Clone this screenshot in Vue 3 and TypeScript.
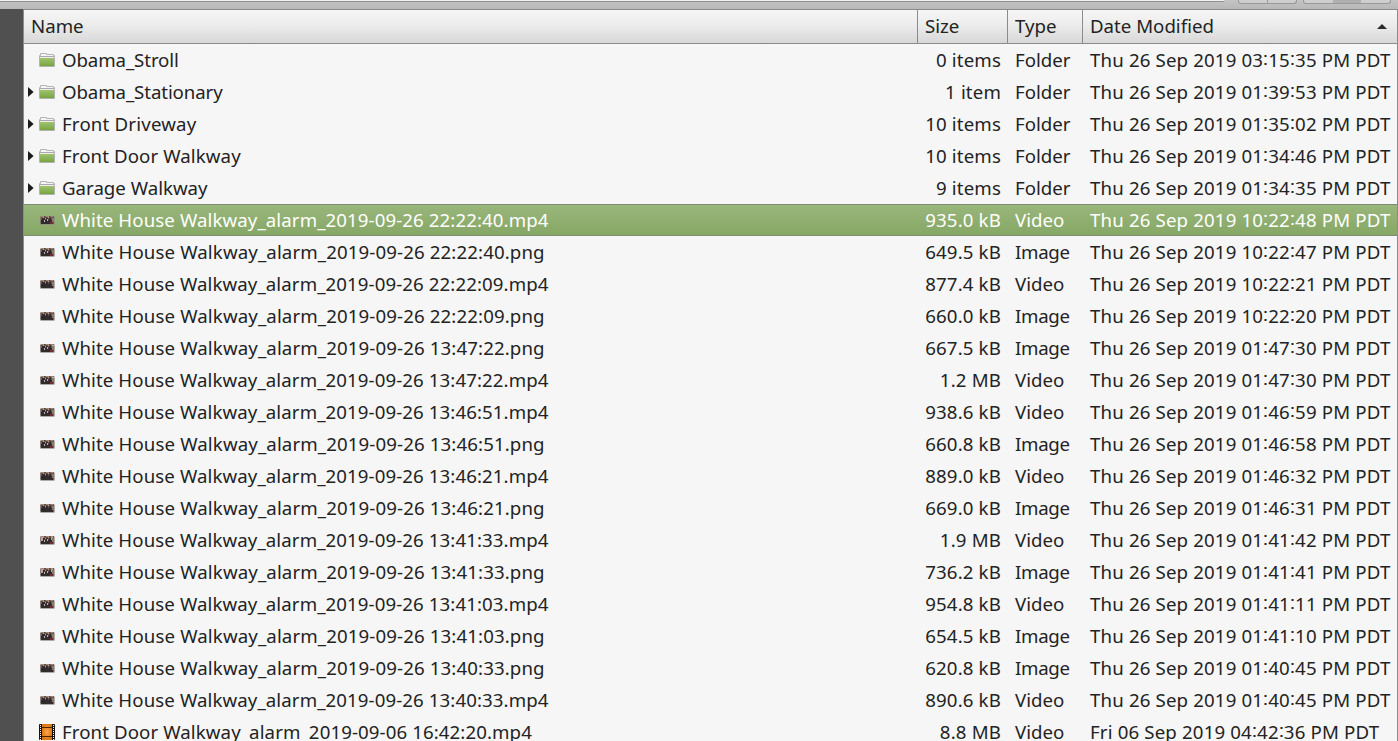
<script setup lang="ts">
interface Entry {
  name: string
  size: string
  kind: 'Folder' | 'Video' | 'Image'
  date: string
  icon: 'folder' | 'thumb' | 'film'
  tracking: 'tight' | 'normal' | 'loose' | 'looser' | 'wide'
  expandable?: boolean
  selected?: boolean
  tone?: number
}

const folder = (name: string, size: string, time: string, tracking: Entry['tracking'], expandable = true): Entry => ({
  name, size, kind: 'Folder', date: `Thu 26 Sep 2019 ${time} PM PDT`, icon: 'folder', tracking, expandable,
})

const alarm = (stamp: string, ext: 'mp4' | 'png', size: string, time: string, tone = 0): Entry => ({
  name: `White House Walkway_alarm_2019-09-26 ${stamp}.${ext}`,
  size,
  kind: ext === 'mp4' ? 'Video' : 'Image',
  date: `Thu 26 Sep 2019 ${time} PM PDT`,
  icon: 'thumb',
  tracking: ext === 'mp4' ? 'loose' : 'looser',
  tone,
})

const entries: Entry[] = [
  folder('Obama_Stroll', '0 items', '03:15:35', 'tight', false),
  folder('Obama_Stationary', '1 item', '01:39:53', 'tight'),
  folder('Front Driveway', '10 items', '01:35:02', 'wide'),
  folder('Front Door Walkway', '10 items', '01:34:46', 'loose'),
  folder('Garage Walkway', '9 items', '01:34:35', 'normal'),
  { ...alarm('22:22:40', 'mp4', '935.0 kB', '10:22:48', 1), selected: true },
  alarm('22:22:40', 'png', '649.5 kB', '10:22:47', 1),
  alarm('22:22:09', 'mp4', '877.4 kB', '10:22:21'),
  alarm('22:22:09', 'png', '660.0 kB', '10:22:20'),
  alarm('13:47:22', 'png', '667.5 kB', '01:47:30', 2),
  alarm('13:47:22', 'mp4', '1.2 MB', '01:47:30', 2),
  alarm('13:46:51', 'mp4', '938.6 kB', '01:46:59', 1),
  alarm('13:46:51', 'png', '660.8 kB', '01:46:58', 1),
  alarm('13:46:21', 'mp4', '889.0 kB', '01:46:32'),
  alarm('13:46:21', 'png', '669.0 kB', '01:46:31'),
  alarm('13:41:33', 'mp4', '1.9 MB', '01:41:42', 3),
  alarm('13:41:33', 'png', '736.2 kB', '01:41:41', 3),
  alarm('13:41:03', 'mp4', '954.8 kB', '01:41:11', 1),
  alarm('13:41:03', 'png', '654.5 kB', '01:41:10', 1),
  alarm('13:40:33', 'png', '620.8 kB', '01:40:45'),
  alarm('13:40:33', 'mp4', '890.6 kB', '01:40:45'),
  { name: 'Front Door Walkway_alarm_2019-09-06 16:42:20.mp4', size: '8.8 MB', kind: 'Video', date: 'Fri 06 Sep 2019 04:42:36 PM PDT', icon: 'film', tracking: 'loose' },
]

// Times are displayed with the ratio sign as separator
const ratio = (s: string) => s.replace(/:/g, '\u2236')
</script>

<template>
  <div class="window">
    <div class="toolbar">
      <div class="pathbar"></div>
      <div class="group nav"><i></i><i></i></div>
      <div class="group views"><i></i><i class="on"></i><i></i></div>
    </div>
    <div class="body">
      <div class="sidebar"></div>
      <div class="list">
        <div class="header">
          <div class="cell">Name</div>
          <div class="cell">Size</div>
          <div class="cell">Type</div>
          <div class="cell last"><span>Date Modified</span><svg width="10" height="5" viewBox="0 0 10 5"><path d="M5 0L10 5H0Z" fill="#2b2b2b" /></svg></div>
        </div>
        <div v-for="e in entries" :key="e.name" class="row" :class="{ selected: e.selected }">
          <div class="name">
            <span class="arrow"><svg v-if="e.expandable" width="6" height="10" viewBox="0 0 6 10"><path d="M0 0L5.6 5L0 10Z" fill="#1c1c1c" /></svg></span>
            <svg v-if="e.icon === 'folder'" class="icon" width="16" height="16" viewBox="0 0 16 16">
              <defs>
                <linearGradient id="leaf" x1="0" y1="0" x2="0" y2="1">
                  <stop offset="0" stop-color="#a0c36e" /><stop offset="1" stop-color="#78a443" />
                </linearGradient>
              </defs>
              <path d="M.5 14.5V3.5H1.5V1.5H7.5V2.5H14.5V3.5H15.5V14.5Z" fill="#f4f4f4" stroke="#b3b3b3" />
              <path d="M1 4.5H15" stroke="#a9a9a9" />
              <path d="M1 5.5H15" stroke="#eeeeee" />
              <rect x="1" y="6" width="14" height="8" fill="url(#leaf)" />
            </svg>
            <svg v-else-if="e.icon === 'thumb'" class="icon" width="16" height="16" viewBox="0 0 16 16">
              <rect x="1" y="4" width="15" height="9" rx="1.5" fill="#8f8b86" fill-opacity=".7" />
              <rect x="1.5" y="4" width="13.5" height="8" rx="1" fill="#66564e" />
              <path d="M2 4.5H5M7 4.5H10M12 4.5H14" stroke="#a3877a" />
              <rect x="2" y="8" width="12" height="4" fill="#302b2d" />
              <path d="M3 6H6V10H3ZM7 6H9V9H7ZM10 6H12V9H10Z" fill="#29272b" fill-opacity=".85" />
              <path d="M6 6H7V7H6ZM9 5H10V6H9ZM4 5H5V6H4Z" fill="#bd9989" />
              <path v-if="e.tone" d="M5 8H6V10H5ZM8 7H9V9H8Z" fill="#b9b3b1" />
              <path v-if="e.tone === 2" d="M13 5H15V10H13Z" fill="#c5bba5" />
              <path v-if="e.tone === 3" d="M2 5H4V9H2ZM12 5H14V8H12Z" fill="#c0a096" />
              <path v-if="e.tone" d="M11 10H13.5V12H11Z" fill="#8a2630" />
              <rect x="13" y="6" width="2" height="4" fill="#877c70" />
            </svg>
            <svg v-else class="icon" width="16" height="16" viewBox="0 0 16 16">
              <defs>
                <radialGradient id="amber">
                  <stop offset="0" stop-color="#f9a44b" /><stop offset="1" stop-color="#dc7614" />
                </radialGradient>
              </defs>
              <rect width="16" height="16" rx="1" fill="#171310" />
              <rect x="3" y="0" width="10" height="16" fill="url(#amber)" />
              <path d="M3 3.5H13M3 12.5H13" stroke="#4a2605" />
              <path d="M1.5 1V16M14.5 1V16" stroke="#fff" stroke-dasharray="1 1" />
            </svg>
            <span :class="e.tracking">{{ e.name }}</span>
          </div>
          <div class="size">{{ e.size }}</div>
          <div class="kind" :class="{ image: e.kind === 'Image' }">{{ e.kind }}</div>
          <div class="date">{{ ratio(e.date) }}</div>
        </div>
      </div>
    </div>
  </div>
</template>

<style>
html, body { margin: 0; overflow: hidden; }
</style>

<style scoped>
.window {
  width: 1398px;
  height: 741px;
  overflow: hidden;
  display: flex;
  flex-direction: column;
  background: #f6f6f6;
  color: #232323;
  font: 18.667px/32px "Noto Sans", sans-serif;
  white-space: pre;
}
.toolbar {
  flex: 0 0 9px;
  box-sizing: border-box;
  height: 9px;
  display: flex;
  align-items: flex-start;
  background: linear-gradient(#c4c4c4, #b8b8b8);
}
.pathbar { width: 1225px; height: 2px; box-sizing: border-box; background: #f1f1f1; border-bottom: 1px solid #8f8f8f; border-radius: 0 0 3px 0; }
.group { display: flex; box-sizing: border-box; height: 4px; border: 1px solid #999; border-top: 0; border-radius: 0 0 3px 3px; background: #cecece; }
.nav { margin-left: 13px; width: 59px; }
.views { margin-left: 6px; width: 88px; }
.group i { flex: 1; }
.nav i + i { border-left: 1px solid #999; }
.group .on { background: #b0b0b0; }
.body { flex: 1; min-height: 0; display: flex; }
.sidebar { flex: 0 0 23px; background: #505050; }
.list {
  flex: 1;
  box-sizing: border-box;
  border: solid #8b8b8b;
  border-width: 1px 1px 0 1px;
}
.header, .row { display: grid; grid-template-columns: 894px 90px 75px 1fr; }
.header {
  box-sizing: border-box;
  height: 34px;
  border-bottom: 1px solid #8b8b8b;
  background: linear-gradient(#f6f6f6, #ececec 45%, #d8d8d8);
}
.header .cell { padding-left: 7px; border-right: 1px solid #8b8b8b; }
.header .last { border: 0; height: 32px; display: flex; align-items: center; justify-content: space-between; padding-right: 10px; }
.row { height: 32px; }
.name { display: flex; align-items: center; }
.arrow { width: 15px; box-sizing: border-box; padding-left: 4px; line-height: 0; }
.icon { margin-right: 7px; flex: none; }
.tight { letter-spacing: -0.1px; }
.loose { letter-spacing: 0.095px; }
.looser { letter-spacing: 0.12px; }
.wide { letter-spacing: 0.19px; }
.size { text-align: right; padding-right: 7px; letter-spacing: 0.15px; }
.kind { padding-left: 7px; }
.image { letter-spacing: -0.3px; }
.date { padding-left: 7px; letter-spacing: 0.15px; }
.row.selected {
  color: #fff;
  background: linear-gradient(#9ab77c, #85a765);
  box-shadow: inset 0 1px #7f8c74, inset 0 -1px #7f8c74;
}
</style>
